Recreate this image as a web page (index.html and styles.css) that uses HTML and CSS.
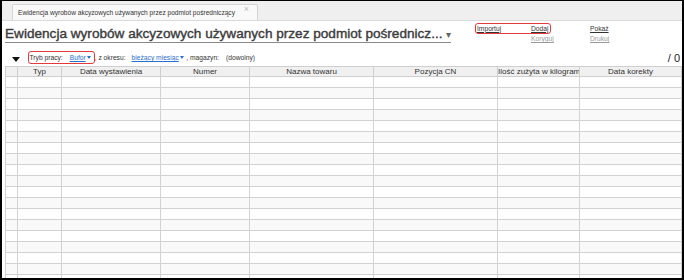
FILE: index.html
```html
<!DOCTYPE html>
<html lang="pl">
<head>
    <meta charset="UTF-8" />
    <title>Ewidencja wyrobów akcyzowych</title>
    <link rel="stylesheet" href="styles.css">
</head>
<body>

<div class="frame">
    <div class="tabbar">
        <div class="tab">
            <span class="tab-title">Ewidencja wyrobów akcyzowych używanych przez podmiot pośredniczący</span>
            <span class="tab-close">×</span>
        </div>
    </div>

    <div class="head">
        <div class="title">Ewidencja wyrobów akcyzowych używanych przez podmiot pośrednicz... <span class="title-caret">▾</span></div>
        <div class="actions">
            <div class="mark mark-actions">
                <a href="#" class="act act-import">Importuj</a>
                <a href="#" class="act">Dodaj</a>
            </div>
            <a href="#" class="act">Pokaż</a>
            <span></span>
            <a href="#" class="act act-off">Koryguj</a>
            <a href="#" class="act act-off">Drukuj</a>
        </div>
    </div>

    <div class="filters">
        <span class="collapse"></span>
        <div class="mark mark-mode">
            <span class="label">Tryb pracy:</span>
            <a href="#" class="drop">Bufor</a><span class="drop-caret"></span>
        </div>
        <span class="label">, z okresu:</span>
        <a href="#" class="drop drop-period">bieżący miesiąc</a><span class="drop-caret"></span>
        <span class="label label-store">, magazyn:</span>
        <span class="label label-any">(dowolny)</span>
        <span class="count">/ 0</span>
    </div>

    <table class="grid">
        <colgroup>
            <col style="width: 12px">
            <col style="width: 44px">
            <col style="width: 99px">
            <col style="width: 89px">
            <col style="width: 124px">
            <col style="width: 124px">
            <col style="width: 82px">
            <col>
        </colgroup>
        <thead>
            <tr>
                <th></th>
                <th>Typ</th>
                <th>Data wystawienia</th>
                <th>Numer</th>
                <th>Nazwa towaru</th>
                <th>Pozycja CN</th>
                <th class="th-cut">Ilość zużyta w kilogramach</th>
                <th>Data korekty</th>
            </tr>
        </thead>
        <tbody id="rows"></tbody>
    </table>
</div>

<script>
    // puste wiersze siatki
    const rows = document.getElementById('rows');
    for (let i = 0; i < 19; i++) {
        rows.innerHTML += '<tr><td></td><td></td><td></td><td></td><td></td><td></td><td></td><td></td></tr>';
    }
</script>

</body>
</html>
```

FILE: styles.css
```css
body {
    margin: 0;
    font-family: 'Liberation Sans', Arial, sans-serif;
    color: #333;
    background: #fff;
}

.frame {
    height: 280px;
    box-sizing: border-box;
    border: 2px solid #000;
    border-top-width: 1px;
    overflow: hidden;
    background: #fff;
}

/* zakładki */
.tabbar {
    height: 19px;
    background: #efefef;
    border-bottom: 1px solid #dadada;
    padding-left: 10px;
    display: flex;
    align-items: flex-end;
}

.tab {
    width: 246px;
    height: 16px;
    box-sizing: border-box;
    background: #f9f9f9;
    border: 1px solid #d4d4d4;
    border-bottom: none;
    border-radius: 2px 2px 0 0;
    padding: 0 8px 0 5px;
    display: flex;
    justify-content: space-between;
    align-items: center;
}

.tab-title {
    font-size: 6.6px;
    color: #333;
    white-space: nowrap;
}

.tab-close {
    font-size: 9px;
    color: #bbb;
    line-height: 9px;
    align-self: flex-start;
}

/* nagłówek */
.head {
    height: 24px;
    padding-left: 3px;
    display: grid;
    grid-template-columns: 470px auto;
    align-items: start;
}

.title {
    justify-self: start;
    margin-top: 6px;
    font-size: 13.6px;
    line-height: 14px;
    color: #3c3c3c;
    -webkit-text-stroke: 0.4px #3c3c3c;
    white-space: nowrap;
    border-bottom: 1px solid #8a8a8a;
}

.title-caret {
    font-size: 10px;
    color: #666;
    -webkit-text-stroke: 0;
}

.actions {
    margin-top: 2px;
    display: grid;
    grid-template-columns: 56px 59px auto;
    grid-template-rows: 11px 10px;
    align-items: center;
    font-size: 6.7px;
}

.mark {
    border: 1.5px solid #e5393b;
    border-radius: 3px;
    box-sizing: border-box;
}

.mark-actions {
    grid-column: 1 / 3;
    justify-self: start;
    height: 11.5px;
    display: flex;
    align-items: center;
    padding: 0 1.5px 0 1px;
}

.act {
    color: #333;
    line-height: 8px;
}

.act-import {
    width: 54px;
}

.act-off {
    color: #999;
}

/* filtry */
.filters {
    height: 13px;
    margin: 6px 0 2px 0;
    padding-left: 10px;
    display: flex;
    align-items: center;
    font-size: 6.7px;
    color: #333;
}

.collapse {
    width: 0;
    height: 0;
    border-left: 4px solid transparent;
    border-right: 4px solid transparent;
    border-top: 5px solid #111;
    margin: 3px 8px 0 0;
}

.mark-mode {
    height: 13px;
    display: flex;
    align-items: center;
    padding: 0 3px 0 0.5px;
}

.mark-mode .label {
    margin-right: 7px;
}

.drop {
    color: #2a6fcf;
}

.drop-caret {
    width: 0;
    height: 0;
    border-left: 2.5px solid transparent;
    border-right: 2.5px solid transparent;
    border-top: 3px solid #2a6fcf;
    margin-left: 1px;
}

.drop-period {
    margin-left: 6px;
}

.label-store {
    margin-left: 2.5px;
}

.label-any {
    margin-left: 7px;
}

.count {
    margin-left: auto;
    margin-right: 2px;
    font-size: 11px;
    color: #222;
}

/* siatka */
.grid {
    margin-left: 3px;
    width: calc(100% - 3px);
    border-collapse: collapse;
    table-layout: fixed;
}

.grid th {
    height: 9px;
    padding: 0;
    font-size: 8px;
    line-height: 9px;
    font-weight: normal;
    color: #333;
    background: #f0f0f0;
    border: 1px solid #cfcfcf;
    white-space: nowrap;
    overflow: hidden;
}

.grid .th-cut {
    text-overflow: clip;
}

.grid td {
    height: 10px;
    padding: 0;
    border: 1px solid #d2d2d2;
}

.grid tbody tr:nth-child(even) td {
    background: #f9f9f9;
}
```
